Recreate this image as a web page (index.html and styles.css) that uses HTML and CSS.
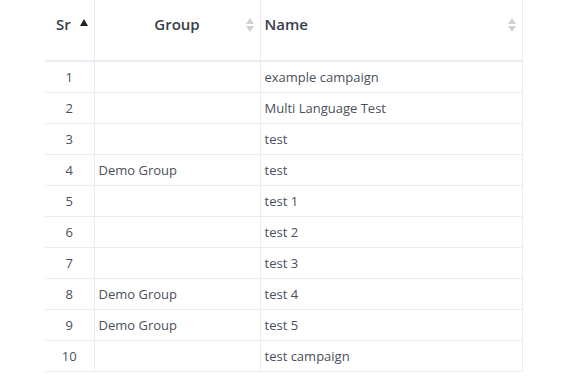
FILE: index.html
```html
<!DOCTYPE html>
<html>
<head>
<meta charset="utf-8">
<link rel="stylesheet" href="styles.css">
</head>
<body>
<div class="wrap">
<table class="grid">
  <colgroup>
    <col class="c-sr"><col class="c-group"><col class="c-name">
  </colgroup>
  <thead>
    <tr>
      <th class="h-sr"><span class="label">Sr</span><span class="asc"></span></th>
      <th class="h-group"><span class="label">Group</span><span class="sort"><i class="up"></i><i class="down"></i></span></th>
      <th class="h-name"><span class="label">Name</span><span class="sort"><i class="up"></i><i class="down"></i></span></th>
    </tr>
  </thead>
  <tbody>
    <tr><td class="sr">1</td><td></td><td>example campaign</td></tr>
    <tr><td class="sr">2</td><td></td><td>Multi Language Test</td></tr>
    <tr><td class="sr">3</td><td></td><td>test</td></tr>
    <tr><td class="sr">4</td><td>Demo Group</td><td>test</td></tr>
    <tr><td class="sr">5</td><td></td><td>test 1</td></tr>
    <tr><td class="sr">6</td><td></td><td>test 2</td></tr>
    <tr><td class="sr">7</td><td></td><td>test 3</td></tr>
    <tr><td class="sr">8</td><td>Demo Group</td><td>test 4</td></tr>
    <tr><td class="sr">9</td><td>Demo Group</td><td>test 5</td></tr>
    <tr><td class="sr">10</td><td></td><td>test campaign</td></tr>
  </tbody>
</table>
</div>
</body>
</html>
```
FILE: styles.css
```css
html, body {
  margin: 0;
  padding: 0;
  background: #fff;
  font-family: "Open Sans", "Liberation Sans", sans-serif;
}
.wrap {
  padding-left: 45px;
}
.grid {
  border-collapse: collapse;
  width: 477px;
  table-layout: fixed;
  color: #4a505c;
  font-size: 13px;
}
.c-sr { width: 49px; }
.c-group { width: 166px; }
.c-name { width: 262px; }
.grid th {
  height: 61px;
  padding: 0 4px 12px 4px;
  box-sizing: border-box;
  font-size: 15px;
  font-weight: 600;
  color: #363d4a;
  border-right: 1px solid #e9ecf1;
  border-bottom: 2px solid #e9ecf1;
  position: relative;
  vertical-align: middle;
}
.h-sr { text-align: left; }
.h-sr .label { margin-left: 7px; }
.asc {
  position: absolute;
  left: 35px;
  top: 19px;
  width: 0;
  height: 0;
  border-left: 4px solid transparent;
  border-right: 4px solid transparent;
  border-bottom: 7px solid #222;
}
.h-group { text-align: center; padding-right: 12px; }
.h-name { text-align: left; }
.sort {
  position: absolute;
  right: 6px;
  top: 18px;
  width: 8px;
  height: 15px;
  display: flex;
  flex-direction: column;
  align-items: center;
  gap: 2px;
}
.sort i {
  width: 0;
  height: 0;
  border-left: 4px solid transparent;
  border-right: 4px solid transparent;
}
.sort .up { border-bottom: 6px solid #cfd1d4; }
.sort .down { border-top: 6px solid #cfd1d4; }
.grid td {
  height: 31px;
  box-sizing: border-box;
  padding: 0 4px;
  border-right: 1px solid #e9ecf1;
  border-bottom: 1px solid #e9ecf1;
  white-space: nowrap;
}
.grid td.sr { text-align: center; }
```
